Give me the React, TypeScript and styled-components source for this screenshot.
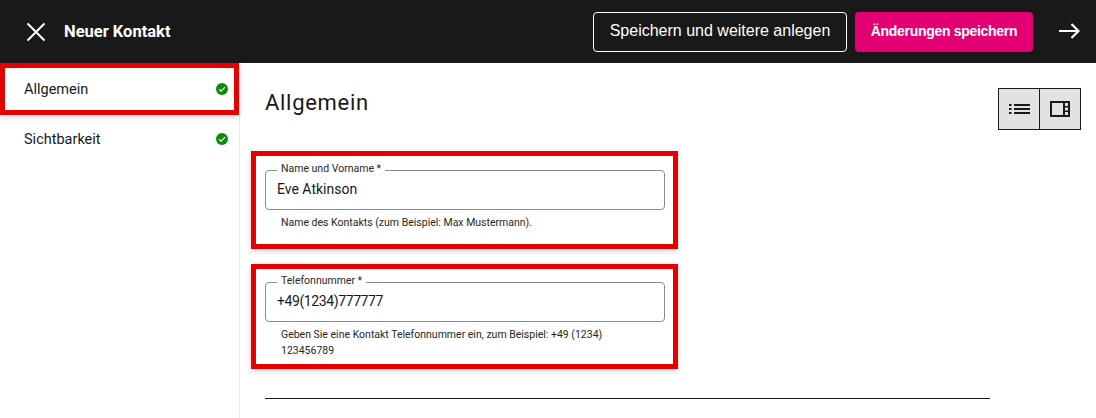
import styled, { createGlobalStyle } from "styled-components";

const GlobalStyle = createGlobalStyle`
  html, body {
    margin: 0;
    padding: 0;
    background: #fff;
    overflow: hidden;
  }
  * {
    box-sizing: border-box;
  }
`;

const Page = styled.div`
  width: 1096px;
  height: 418px;
  overflow: hidden;
  font-family: "Roboto", "Liberation Sans", sans-serif;
  color: #191919;
`;

const Header = styled.header`
  height: 63px;
  background: #191919;
  display: flex;
  align-items: center;
  padding: 0 16px 0 26px;
`;

const HeaderTitle = styled.h1`
  margin: 0 0 0 18px;
  flex: 1;
  font-size: 16.5px;
  font-weight: 700;
  color: #fff;
`;

const IconButton = styled.button`
  padding: 0;
  border: none;
  background: none;
  display: flex;
  color: #fff;
`;

const OutlineButton = styled.button`
  width: 254px;
  height: 40px;
  padding: 0 0 2px;
  border: 1px solid #fff;
  border-radius: 4px;
  background: transparent;
  color: #fff;
  font-family: "Liberation Sans", sans-serif;
  font-size: 16px;
`;

const PrimaryButton = styled.button`
  width: 178px;
  height: 40px;
  margin: 0 26px 0 8px;
  padding: 0 0 2px;
  border: none;
  border-radius: 4px;
  background: #e20074;
  color: #fff;
  font-family: "Liberation Sans", sans-serif;
  font-size: 14px;
  font-weight: 700;
  letter-spacing: -0.3px;
`;

const Body = styled.div`
  display: flex;
  height: 355px;
`;

const Sidebar = styled.nav`
  width: 240px;
  border-right: 1px solid #e8e8e8;
`;

const NavItem = styled.div<{ $active?: boolean }>`
  height: ${(p) => (p.$active ? "52px" : "48px")};
  width: 239px;
  display: flex;
  align-items: center;
  justify-content: space-between;
  padding: 0 ${(p) => (p.$active ? "6px" : "11px")} 0 ${(p) => (p.$active ? "19px" : "24px")};
  font-size: 14.5px;
  border: ${(p) => (p.$active ? "5px solid #e60000" : "none")};
  box-shadow: ${(p) => (p.$active ? "0 2px 6px rgba(0, 0, 0, 0.18)" : "none")};
`;

const Main = styled.main`
  flex: 1;
  padding: 25px 15px 0 11px;
`;

const TitleRow = styled.div`
  display: flex;
  justify-content: space-between;
  align-items: flex-start;
  height: 63px;
  padding-left: 14px;
`;

const PageTitle = styled.h2`
  margin: 0;
  font-size: 22px;
  line-height: 30px;
  font-weight: 400;
  letter-spacing: 0.7px;
`;

const ViewToggle = styled.div`
  display: flex;
  width: 83px;
  height: 42px;
  border: 1px solid #191919;
`;

const ToggleButton = styled.button`
  flex: 1;
  padding: 0;
  background: #e2e2e2;
  border: none;
  display: flex;
  align-items: center;
  justify-content: center;
  color: #191919;

  & + & {
    border-left: 1px solid #191919;
  }
`;

const Highlight = styled.section<{ $height: number; $top: number }>`
  width: 427px;
  height: ${(p) => p.$height}px;
  margin-bottom: 15px;
  padding: ${(p) => p.$top}px 8px 0 9px;
  border: 5px solid #e60000;
  box-shadow: 0 2px 6px rgba(0, 0, 0, 0.18);
`;

const Field = styled.fieldset`
  margin: 0;
  padding: 0 11px;
  height: 47px;
  border: 1px solid #8c8c8c;
  border-radius: 4px;
`;

const Legend = styled.legend`
  margin-left: 0;
  padding: 0 4px 2px;
  font-size: 10.5px;
  line-height: 12px;
  color: #262626;
`;

const Value = styled.div<{ $spacing?: number }>`
  font-size: 14px;
  line-height: 24px;
  letter-spacing: ${(p) => p.$spacing ?? 0}px;
`;

const Hint = styled.p`
  margin: 5px 0 0;
  padding: 0 16px;
  font-size: 10.5px;
  line-height: 16px;
  color: #262626;
`;

const Divider = styled.hr`
  width: 725px;
  margin: 29px 0 0 14px;
  border: none;
  border-top: 1px solid #191919;
`;

const CheckIcon = () => (
  <svg width="12" height="12" viewBox="0 0 12 12">
    <circle cx="6" cy="6" r="6" fill="#0b8a0b" />
    <path d="M3 6.2 5.1 8.2 9 4.2" fill="none" stroke="#fff" strokeWidth="1.2" />
  </svg>
);

export default function App() {
  return (
    <Page>
      <GlobalStyle />
      <Header>
        <IconButton aria-label="Schließen">
          <svg width="20" height="20" viewBox="0 0 20 20" fill="none" stroke="currentColor" strokeWidth="2">
            <path d="M1.5 1.5 18.5 18.5M18.5 1.5 1.5 18.5" />
          </svg>
        </IconButton>
        <HeaderTitle>Neuer Kontakt</HeaderTitle>
        <OutlineButton>Speichern und weitere anlegen</OutlineButton>
        <PrimaryButton>Änderungen speichern</PrimaryButton>
        <IconButton aria-label="Weiter">
          <svg width="21" height="18" viewBox="0 0 21 18" fill="none" stroke="currentColor" strokeWidth="2.2" style={{ marginTop: -2 }}>
            <path d="M0 9H19.5M12.5 2 19.5 9 12.5 16" />
          </svg>
        </IconButton>
      </Header>
      <Body>
        <Sidebar>
          <NavItem $active>
            Allgemein
            <CheckIcon />
          </NavItem>
          <NavItem>
            Sichtbarkeit
            <CheckIcon />
          </NavItem>
        </Sidebar>
        <Main>
          <TitleRow>
            <PageTitle>Allgemein</PageTitle>
            <ViewToggle>
              <ToggleButton aria-label="Liste">
                <svg width="21" height="12" viewBox="0 0 21 12" fill="currentColor">
                  <path d="M0 1h2.5v2H0zM5 1h16v2H5zM0 5h2.5v2H0zM5 5h16v2H5zM0 9h2.5v2H0zM5 9h16v2H5z" />
                </svg>
              </ToggleButton>
              <ToggleButton aria-label="Seitenleiste">
                <svg width="20" height="16" viewBox="0 0 20 16" fill="currentColor">
                  <path d="M0 0h20v16H0zM2 2v12h11V2zM15 2v3h3V2zM15 6.5v3h3v-3zM15 11v3h3v-3z" fillRule="evenodd" />
                </svg>
              </ToggleButton>
            </ViewToggle>
          </TitleRow>
          <Highlight $height={98} $top={7}>
            <Field>
              <Legend>Name und Vorname *</Legend>
              <Value>Eve Atkinson</Value>
            </Field>
            <Hint>Name des Kontakts (zum Beispiel: Max Mustermann).</Hint>
          </Highlight>
          <Highlight $height={105} $top={6}>
            <Field>
              <Legend>Telefonnummer *</Legend>
              <Value $spacing={-0.4}>+49(1234)777777</Value>
            </Field>
            <Hint>Geben Sie eine Kontakt Telefonnummer ein, zum Beispiel: +49 (1234) 123456789</Hint>
          </Highlight>
          <Divider />
        </Main>
      </Body>
    </Page>
  );
}
